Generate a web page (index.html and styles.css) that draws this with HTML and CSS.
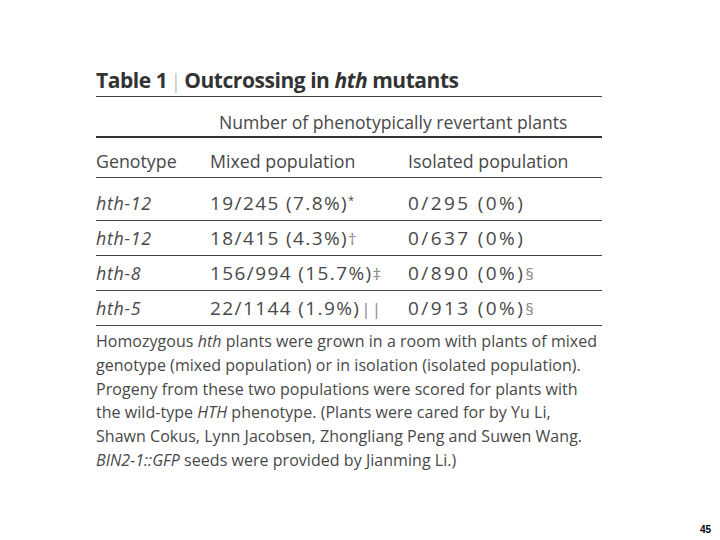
FILE: index.html
```html
<!DOCTYPE html>
<html>
<head>
<meta charset="utf-8">
<link rel="stylesheet" href="styles.css">
</head>
<body>
<div class="slide">
  <div class="table-block">
    <h1 class="title">Table 1<span class="bar">|</span>Outcrossing in <i>hth</i> mutants</h1>
    <div class="spanhead">Number of phenotypically revertant plants</div>
    <div class="row head">
      <span>Genotype</span><span>Mixed population</span><span>Isolated population</span>
    </div>
    <div class="row first"><span class="gen">hth-12</span><span class="num">19/245 (7.8%)<sup>*</sup></span><span class="num iso">0/295 (0%)</span></div>
    <div class="row"><span class="gen">hth-12</span><span class="num">18/415 (4.3%)<span class="fn">†</span></span><span class="num iso">0/637 (0%)</span></div>
    <div class="row"><span class="gen">hth-8</span><span class="num">156/994 (15.7%)<span class="fn">‡</span></span><span class="num iso">0/890 (0%)<span class="fn">§</span></span></div>
    <div class="row"><span class="gen">hth-5</span><span class="num">22/1144 (1.9%)<span class="fn bars">||</span></span><span class="num iso">0/913 (0%)<span class="fn">§</span></span></div>
    <p class="note">Homozygous <i>hth</i> plants were grown in a room with plants of mixed genotype (mixed population) or in isolation (isolated population). Progeny from these two populations were scored for plants with the wild-type <i>HTH</i> phenotype. (Plants were cared for by Yu Li, Shawn Cokus, Lynn Jacobsen, Zhongliang Peng and Suwen Wang. <i>BIN2-1::GFP</i> seeds were provided by Jianming Li.)</p>
  </div>
  <div class="pagenum">45</div>
</div>
</body>
</html>
```
FILE: styles.css
```css
html, body {
  margin: 0;
  padding: 0;
  background: #fff;
}
.slide {
  width: 720px;
  height: 540px;
  display: flex;
  flex-direction: column;
  font-family: "Open Sans", "Liberation Sans", sans-serif;
  color: #484848;
}
.table-block {
  margin: 66px 0 0 96px;
  width: 506px;
}
.title {
  margin: 0;
  font-size: 21px;
  font-weight: 700;
  color: #333;
  letter-spacing: -0.45px;
  line-height: 28px;
  padding-bottom: 2px;
  border-bottom: 1px solid #444;
}
.title .bar {
  font-weight: 300;
  color: #aaa;
  margin: 0 3px 0 3px;
}
.spanhead {
  padding-left: 123px;
  font-size: 17.6px;
  line-height: 24px;
  padding-top: 13px;
  padding-bottom: 2px;
  border-bottom: 2px solid #333;
}
.row {
  display: grid;
  grid-template-columns: 114px 198px 1fr;
  height: 34px;
  font-size: 17.8px;
  line-height: 34px;
  border-bottom: 1px solid #444;
  white-space: nowrap;
  overflow: hidden;
}
.row.head {
  padding-top: 7px;
  height: 32px;
  line-height: 32px;
}
.row.first {
  padding-top: 8px;
}
.gen {
  font-style: italic;
  letter-spacing: 0.7px;
}
.num {
  font-size: 19px;
  letter-spacing: 1.4px;
}
.num.iso {
  letter-spacing: 2.4px;
}
.fn {
  font-size: 17px;
  line-height: 1;
  color: #888;
  letter-spacing: 0;
}
.bars {
  letter-spacing: 1px;
  margin-left: 1px;
}
.row sup {
  font-size: 11px;
  vertical-align: 6px;
  line-height: 0;
}
.note {
  margin: 4px 0 0 0;
  font-size: 16px;
  line-height: 23.8px;
  letter-spacing: 0.04px;
  color: #484848;
}
.pagenum {
  margin-top: auto;
  align-self: flex-end;
  margin-right: 9px;
  margin-bottom: 5px;
  font-size: 10px;
  font-weight: 700;
  color: #000;
  font-family: "Liberation Sans", sans-serif;
}
```
